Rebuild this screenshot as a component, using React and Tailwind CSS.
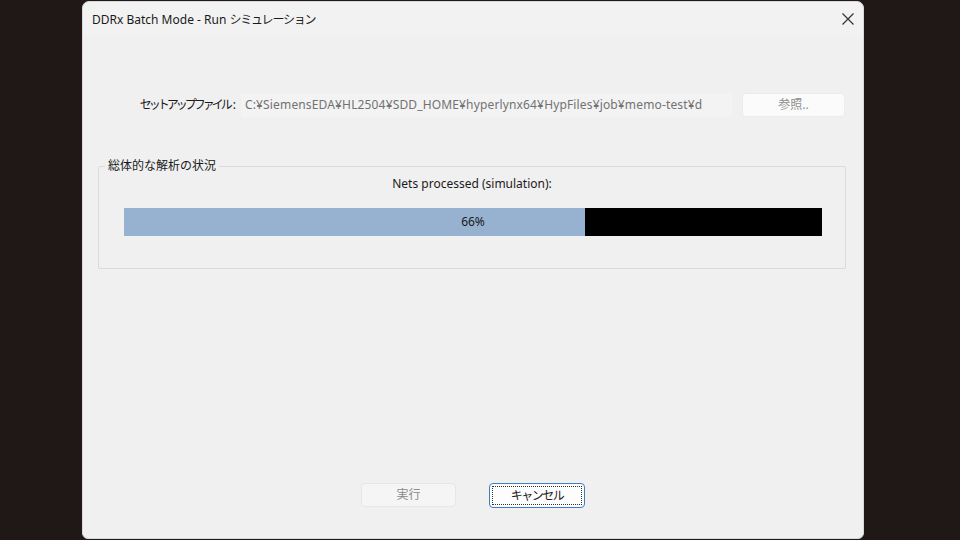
const font = { fontFamily: '"Noto Sans", "Noto Sans CJK JP", sans-serif' };

export default function App() {
  return (
    <div className="w-[960px] h-[540px] bg-[#201816] flex pl-[82px] overflow-hidden" style={font}>
      <div className="w-[782px] h-[538px] mt-[1px] rounded-t-[7px] rounded-b-[6px] bg-[#f0f0f0] border border-[#d8d8d8] flex flex-col">
        {/* title bar */}
        <div className="h-[35px] flex items-center justify-between pl-[9px] pr-[9px] bg-[#f2f2f2] rounded-t-[7px]">
          <span className="text-[12px] text-[#1a1a1a] leading-none">
            DDRx Batch Mode - Run <span className="tracking-[-1.2px]">シミュレーション</span>
          </span>
          <svg width="12" height="12" viewBox="0 0 12 12" className="mb-[1px]">
            <path d="M0.5 0.5 L11.5 11.5 M11.5 0.5 L0.5 11.5" stroke="#333" strokeWidth="1.2" />
          </svg>
        </div>

        {/* setup file row */}
        <div className="flex items-center mt-[56px] pl-[15px] h-[24px]">
          <div className="w-[138px] flex justify-end items-center text-[12px] text-[#1a1a1a] whitespace-nowrap">
            <span className="tracking-[-3px]">セットアップファイル</span>
            <span className="ml-[3px]">:</span>
          </div>
          <div className="ml-[5px] w-[491px] h-[24px] bg-[#f3f3f3] flex items-center pl-[4px] overflow-hidden whitespace-nowrap text-[12px] text-[#727272] tracking-[0.15px]">
            C:¥SiemensEDA¥HL2504¥SDD_HOME¥hyperlynx64¥HypFiles¥job¥memo-test¥d
          </div>
          <div className="ml-[10px] w-[103px] h-[24px] rounded-[4px] bg-[#fbfbfb] border border-[#ececec] flex items-center justify-center text-[12px] text-[#8f8f8f]">
            参照..
          </div>
        </div>

        {/* group box */}
        <fieldset className="mt-[42px] ml-[15px] w-[748px] h-[110px] border border-[#dadada] rounded-[2px] px-0 pt-0 pb-0 m-0 min-w-0">
          <legend className="ml-[6px] px-[3px] text-[12px] text-[#1a1a1a] leading-[14px]">総体的な解析の状況</legend>
          <div className="text-center text-[12px] text-[#1a1a1a] mt-[3px] leading-[16px]">Nets processed (simulation):</div>
          <div className="mt-[16px] ml-[25px] w-[698px] h-[28px] bg-black flex relative">
            <div className="w-[66%] h-full bg-[#97b2d1]" />
            <div className="absolute inset-0 flex items-center justify-center text-[12px] text-[#1a1a1a]">66%</div>
          </div>
        </fieldset>

        {/* buttons */}
        <div className="mt-auto mb-[30px] flex justify-center gap-[33px]">
          <div className="w-[95px] h-[24px] rounded-[4px] bg-[#f5f5f5] border border-[#e6e6e6] flex items-center justify-center text-[12px] text-[#8a8a8a]">
            実行
          </div>
          <div className="w-[96px] h-[25px] rounded-[4px] bg-[#fdfdfd] border border-[#3c7fc4] p-[2px] flex">
            <div className="flex-1 border border-dotted border-[#333] flex items-center justify-center text-[12px] text-[#1a1a1a] tracking-[-1.5px]">
              キャンセル
            </div>
          </div>
        </div>
      </div>
    </div>
  );
}
